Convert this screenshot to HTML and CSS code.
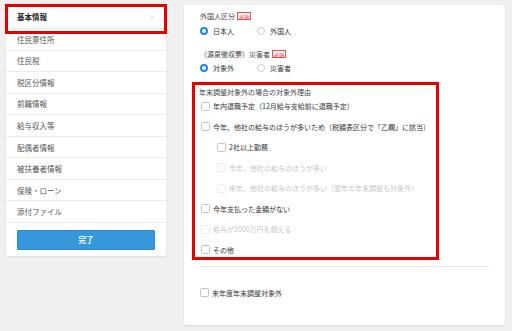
FILE: index.html
```html
<!DOCTYPE html>
<html lang="ja">
<head>
<meta charset="utf-8">
<link rel="stylesheet" href="styles.css">
</head>
<body>
<div class="page">
  <nav class="sidebar">
    <div class="nav-item active"><span>基本情報</span><span class="chev">›</span></div>
    <div class="nav-item">住民票住所</div>
    <div class="nav-item">住民税</div>
    <div class="nav-item">税区分情報</div>
    <div class="nav-item">前職情報</div>
    <div class="nav-item">給与収入等</div>
    <div class="nav-item">配偶者情報</div>
    <div class="nav-item">被扶養者情報</div>
    <div class="nav-item">保険・ローン</div>
    <div class="nav-item">添付ファイル</div>
    <button class="done-btn">完了</button>
  </nav>
  <main class="card">
    <div class="field-label">外国人区分<span class="req">必須</span></div>
    <div class="radio-row">
      <label class="radio-opt"><span class="radio on"></span>日本人</label>
      <label class="radio-opt"><span class="radio"></span>外国人</label>
    </div>
    <div class="field-label second">（源泉徴収票）災害者<span class="req">必須</span></div>
    <div class="radio-row tight">
      <label class="radio-opt"><span class="radio on"></span>対象外</label>
      <label class="radio-opt"><span class="radio"></span>災害者</label>
    </div>
    <section class="reasons">
      <div class="reasons-title">年末調整対象外の場合の対象外理由</div>
      <div class="cb-row"><span class="cb"></span>年内退職予定（12月給与支給前に退職予定）</div>
      <div class="cb-row"><span class="cb"></span>今年、他社の給与のほうが多いため（税額表区分で「乙欄」に該当）</div>
      <div class="cb-row indent"><span class="cb"></span>2社以上勤務</div>
      <div class="cb-row indent disabled"><span class="cb"></span>今年、他社の給与のほうが多い</div>
      <div class="cb-row indent disabled"><span class="cb"></span>来年、他社の給与のほうが多い（翌年の年末調整も対象外）</div>
      <div class="cb-row"><span class="cb"></span>今年支払った金額がない</div>
      <div class="cb-row disabled"><span class="cb"></span>給与が2000万円を超える</div>
      <div class="cb-row"><span class="cb"></span>その他</div>
    </section>
    <hr class="divider">
    <div class="cb-row next-year"><span class="cb"></span>来年度年末調整対象外</div>
  </main>
</div>
</body>
</html>
```

FILE: styles.css
```css
* { box-sizing: border-box; }
html, body { margin: 0; padding: 0; }
body {
  background: #f0f0f0;
  font-family: "Noto Sans CJK JP", "Noto Sans", sans-serif;
  color: #333;
  width: 512px;
  height: 331px;
  overflow: hidden;
}
.page {
  display: flex;
  align-items: flex-start;
  gap: 18px;
  padding: 5px 0 0 6px;
}
.sidebar {
  width: 160px;
  background: #fff;
  border-radius: 2px;
  box-shadow: 0 1px 2px rgba(0,0,0,0.1);
  padding-bottom: 6px;
  display: flex;
  flex-direction: column;
}
.nav-item {
  height: 21.56px;
  border-bottom: 1px solid #ebebeb;
  padding: 0 11px;
  display: flex;
  align-items: center;
  justify-content: space-between;
  font-size: 7.5px;
  color: #555;
  white-space: nowrap;
}
.nav-item.active {
  height: 24px;
  font-weight: bold;
  color: #222;
  position: relative;
}
.nav-item.active::after {
  content: "";
  position: absolute;
  top: -1px;
  left: -1px;
  right: -1px;
  height: 24px;
  border: 3px solid #e60000;
}
.chev {
  color: #bbb;
  font-weight: normal;
  font-size: 9px;
  margin-right: 2px;
}
.done-btn {
  margin: 7px 11px 0;
  height: 20px;
  background: #3498db;
  border: 1px solid #2b8ad0;
  border-radius: 1px;
  color: #fff;
  font-family: inherit;
  font-weight: bold;
  font-size: 7.5px;
  padding: 0;
}
.card {
  width: 321px;
  background: #fff;
  border-radius: 2px;
  box-shadow: 0 1px 2px rgba(0,0,0,0.12);
  padding: 6px 16px 26px 16px;
  font-size: 7px;
}
.field-label {
  height: 10px;
  line-height: 10px;
  display: flex;
  align-items: center;
  color: #444;
  white-space: nowrap;
}
.field-label.second { margin-top: 12px; }
.req {
  display: inline-block;
  margin-left: 2px;
  border: 1px solid #e85050;
  background: #fff2f2;
  color: #e03030;
  font-size: 5px;
  line-height: 5px;
  padding: 0.5px 1px;
}
.radio-row {
  margin-top: 4px;
  height: 12px;
  display: flex;
  align-items: center;
}
.radio-row.tight { margin-top: 3px; }
.radio-opt {
  width: 57px;
  display: flex;
  align-items: center;
  gap: 5px;
  color: #333;
  white-space: nowrap;
}
.radio {
  width: 8px;
  height: 8px;
  border-radius: 50%;
  border: 1px solid #ccc;
  background: #fff;
  flex: none;
}
.radio.on {
  border: 2.5px solid #1a87e0;
}
.reasons {
  margin: 8px 0 0 -8px;
  width: 247px;
  border: 3px solid #e60000;
  padding: 2px 0 1px 6px;
}
.reasons-title {
  height: 10px;
  line-height: 10px;
  margin-left: -2px;
  color: #444;
  white-space: nowrap;
}
.cb-row {
  height: 12px;
  display: flex;
  align-items: center;
  gap: 3px;
  color: #333;
  white-space: nowrap;
}
.reasons .cb-row { margin-top: 8.57px; }
.reasons .reasons-title + .cb-row { margin-top: 3px; }
.cb-row.indent { padding-left: 16px; }
.cb {
  width: 9px;
  height: 9px;
  border: 1px solid #c4c4c4;
  border-radius: 1.5px;
  background: #fff;
  flex: none;
}
.cb-row.disabled { color: #c8c8c8; }
.cb-row.disabled .cb { border-color: #ececec; }
.divider {
  margin: 6px 0 0 0;
  border: 0;
  border-top: 1px solid #e4e4e4;
  height: 0;
}
.cb-row.next-year { margin-top: 20px; }
```
